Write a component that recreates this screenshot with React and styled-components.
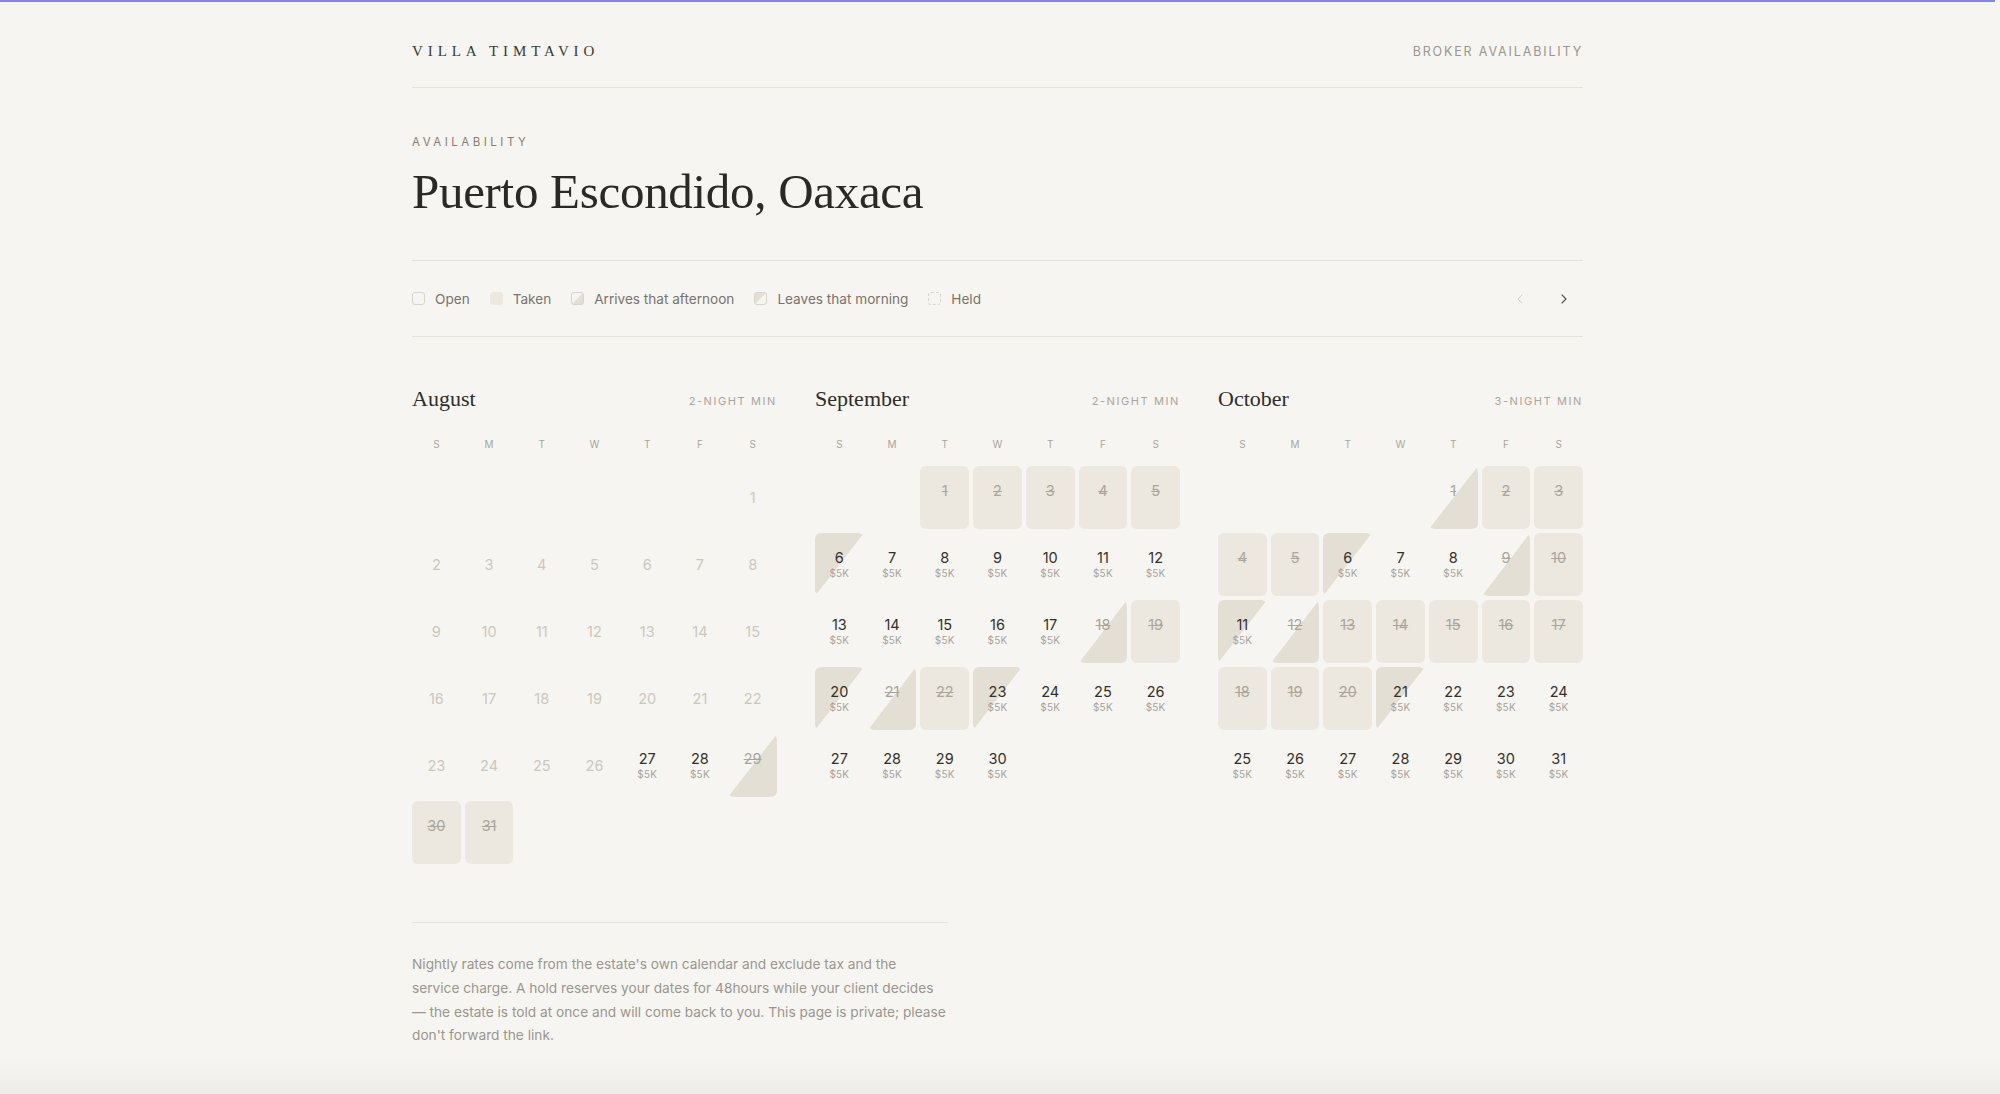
import styled, { createGlobalStyle } from "styled-components";
import { ChevronLeft, ChevronRight } from "lucide-react";

const GlobalStyle = createGlobalStyle`
  * { box-sizing: border-box; }
  html, body {
    margin: 0;
    padding: 0;
    background: #f7f5f1;
    overflow: hidden;
  }
  body {
    padding-right: 5px;
    font-family: Inter, "Noto Sans", sans-serif;
    color: #2f2d2a;
  }
`;

const sans = `Inter, "Noto Sans", sans-serif`;
const serif = `"Liberation Serif", "DejaVu Serif", serif`;

const TAKEN = "#ece8df";
const SLANT = "#e4dfd4";

const TopLine = styled.div`
  height: 2px;
  background: #8487d2;
`;

const Page = styled.div`
  width: 1171px;
  margin: 0 auto;
  min-height: calc(100vh - 2px);
`;

const Header = styled.header`
  display: flex;
  justify-content: space-between;
  align-items: center;
  height: 86px;
  padding-top: 14px;
  border-bottom: 1px solid #e6e3dd;
`;

const Brand = styled.div`
  font-family: ${serif};
  font-size: 15px;
  letter-spacing: 4.9px;
  color: #3b3935;
`;

const HeaderLink = styled.div`
  font-family: ${sans};
  font-size: 12.5px;
  letter-spacing: 1.85px;
  color: #9a968f;
`;

const Intro = styled.section`
  padding: 46px 0 40px;
  border-bottom: 1px solid #e6e3dd;
`;

const Eyebrow = styled.div`
  font-size: 11.5px;
  line-height: 16px;
  letter-spacing: 3.5px;
  color: #8b7b6e;
`;

const Title = styled.h1`
  margin: 14px 0 0;
  font-family: ${serif};
  font-weight: 400;
  font-size: 49px;
  line-height: 56px;
  letter-spacing: -0.3px;
  color: #2b2926;
`;

const LegendBar = styled.div`
  display: flex;
  align-items: center;
  justify-content: space-between;
  height: 76px;
  border-bottom: 1px solid #e6e3dd;
`;

const LegendList = styled.div`
  display: flex;
  align-items: center;
  gap: 20px;
`;

const LegendItem = styled.div`
  display: flex;
  align-items: center;
  gap: 10px;
  font-size: 13.6px;
  color: #77736d;
`;

const swatchBg = {
  open: "transparent",
  taken: TAKEN,
  arrive: `linear-gradient(to top left, ${SLANT} 49%, transparent 51%)`,
  leave: `linear-gradient(to bottom right, ${SLANT} 49%, transparent 51%)`,
  held: "transparent",
};

const Swatch = styled.span`
  width: 13px;
  height: 13px;
  border-radius: 3px;
  background: ${(p) => swatchBg[p.$kind]};
  border: 1px ${(p) => (p.$kind === "held" ? "dashed" : "solid")}
    ${(p) => (p.$kind === "taken" ? TAKEN : "#d8d4cc")};
`;

const Nav = styled.div`
  display: flex;
  gap: 12px;
  margin-right: 3px;
`;

const NavButton = styled.button`
  width: 32px;
  height: 32px;
  display: flex;
  align-items: center;
  justify-content: center;
  border: none;
  background: none;
  padding: 0;
  color: ${(p) => (p.disabled ? "#d2cec7" : "#55524d")};
  cursor: pointer;
`;

const Months = styled.section`
  display: grid;
  grid-template-columns: repeat(3, 1fr);
  gap: 38px;
  padding-top: 48px;
`;

const MonthHead = styled.div`
  display: flex;
  justify-content: space-between;
  align-items: center;
  height: 28px;
`;

const MonthName = styled.h2`
  margin: 0;
  font-family: ${serif};
  font-weight: 400;
  font-size: 22px;
  color: #2f2d2a;
`;

const MinStay = styled.div`
  font-size: 11px;
  letter-spacing: 1.6px;
  color: #aaa59d;
  padding-top: 3px;
`;

const Week = styled.div`
  display: grid;
  grid-template-columns: repeat(7, 1fr);
  gap: 4px;
  margin-top: 23px;
  font-size: 10px;
  line-height: 16px;
  color: #aaa59e;
  text-align: center;
`;

const Days = styled.div`
  display: grid;
  grid-template-columns: repeat(7, 1fr);
  grid-auto-rows: 63px;
  gap: 4px;
  margin-top: 14px;
`;

const cellBg = {
  empty: "transparent",
  past: "transparent",
  open: "transparent",
  taken: TAKEN,
  arrive: `linear-gradient(to top left, ${SLANT} 49.6%, transparent 50.4%)`,
  leave: `linear-gradient(to bottom right, ${SLANT} 49.6%, transparent 50.4%)`,
};

const Cell = styled.div`
  display: flex;
  flex-direction: column;
  align-items: center;
  justify-content: center;
  border-radius: 6px;
  background: ${(p) => cellBg[p.$kind]};
`;

const numColor = {
  past: "#cbc7bf",
  open: "#33302c",
  leave: "#33302c",
  taken: "#aaa59c",
  arrive: "#aaa59c",
};

const DayNum = styled.span`
  font-size: 14.5px;
  line-height: 18px;
  color: ${(p) => numColor[p.$kind]};
  text-decoration: ${(p) =>
    p.$kind === "taken" || p.$kind === "arrive" ? "line-through" : "none"};
`;

const Price = styled.span`
  font-size: 10px;
  line-height: 13px;
  letter-spacing: 0.2px;
  color: #a7a39c;
  visibility: ${(p) => (p.$hidden ? "hidden" : "visible")};
`;

const Footer = styled.footer`
  width: 536px;
  margin-top: 58px;
  padding-top: 30px;
  border-top: 1px solid #e6e3dd;
`;

const Note = styled.p`
  margin: 0;
  width: 560px;
  font-size: 13.7px;
  line-height: 23.8px;
  color: #9a958e;
`;

const BottomFade = styled.div`
  position: fixed;
  left: 0;
  right: 0;
  bottom: 0;
  height: 36px;
  background: linear-gradient(rgba(0, 0, 0, 0), rgba(0, 0, 0, 0.035));
  pointer-events: none;
`;

const range = (a, b) => Array.from({ length: b - a + 1 }, (_, i) => a + i);

const months = [
  {
    name: "August",
    min: "2-NIGHT MIN",
    start: 6,
    days: 31,
    past: range(1, 26),
    taken: [30, 31],
    arrive: [29],
    leave: [],
  },
  {
    name: "September",
    min: "2-NIGHT MIN",
    start: 2,
    days: 30,
    past: [],
    taken: [1, 2, 3, 4, 5, 19, 22],
    arrive: [18, 21],
    leave: [6, 20, 23],
  },
  {
    name: "October",
    min: "3-NIGHT MIN",
    start: 4,
    days: 31,
    past: [],
    taken: [2, 3, 4, 5, 10, ...range(13, 20)],
    arrive: [1, 9, 12],
    leave: [6, 11, 21],
  },
];

const kindOf = (m, d) => {
  if (m.past.includes(d)) return "past";
  if (m.taken.includes(d)) return "taken";
  if (m.arrive.includes(d)) return "arrive";
  if (m.leave.includes(d)) return "leave";
  return "open";
};

const Month = ({ month }) => {
  const blanks = Array.from({ length: month.start });
  return (
    <div>
      <MonthHead>
        <MonthName>{month.name}</MonthName>
        <MinStay>{month.min}</MinStay>
      </MonthHead>
      <Week>
        {["S", "M", "T", "W", "T", "F", "S"].map((w, i) => (
          <span key={i}>{w}</span>
        ))}
      </Week>
      <Days>
        {blanks.map((_, i) => (
          <Cell key={"b" + i} $kind="empty" />
        ))}
        {range(1, month.days).map((d) => {
          const kind = kindOf(month, d);
          return (
            <Cell key={d} $kind={kind}>
              <DayNum $kind={kind}>{d}</DayNum>
              {kind !== "past" && (
                <Price $hidden={kind === "taken" || kind === "arrive"}>$5K</Price>
              )}
            </Cell>
          );
        })}
      </Days>
    </div>
  );
};

const legend = [
  ["open", "Open"],
  ["taken", "Taken"],
  ["arrive", "Arrives that afternoon"],
  ["leave", "Leaves that morning"],
  ["held", "Held"],
];

export default function App() {
  return (
    <>
      <GlobalStyle />
      <TopLine />
      <Page>
        <Header>
          <Brand>VILLA TIMTAVIO</Brand>
          <HeaderLink>BROKER AVAILABILITY</HeaderLink>
        </Header>
        <Intro>
          <Eyebrow>AVAILABILITY</Eyebrow>
          <Title>Puerto Escondido, Oaxaca</Title>
        </Intro>
        <LegendBar>
          <LegendList>
            {legend.map(([k, label]) => (
              <LegendItem key={k}>
                <Swatch $kind={k} />
                {label}
              </LegendItem>
            ))}
          </LegendList>
          <Nav>
            <NavButton disabled aria-label="Previous months">
              <ChevronLeft size={16} strokeWidth={1.5} />
            </NavButton>
            <NavButton aria-label="Next months">
              <ChevronRight size={16} strokeWidth={1.6} />
            </NavButton>
          </Nav>
        </LegendBar>
        <Months>
          {months.map((m) => (
            <Month key={m.name} month={m} />
          ))}
        </Months>
        <Footer>
          <Note>
            Nightly rates come from the estate's own calendar and exclude tax and the
            <br />
            service charge. A hold reserves your dates for 48hours while your client decides
            <br />
            — the estate is told at once and will come back to you. This page is private; please
            <br />
            don't forward the link.
          </Note>
        </Footer>
      </Page>
      <BottomFade />
    </>
  );
}
